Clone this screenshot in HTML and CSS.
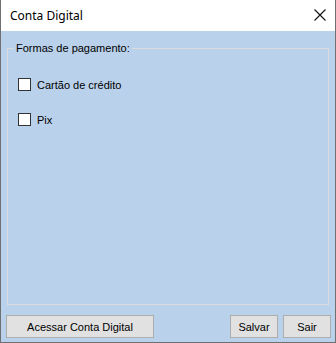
FILE: index.html
```html
<!DOCTYPE html>
<html>
<head>
    <link rel="stylesheet" href="styles.css">
</head>
<body>
    <div class="window">
        <div class="titlebar">
            <span class="title">Conta Digital</span>
            <svg class="close" width="12" height="12" viewBox="0 0 12 12">
                <path d="M0.5 0.5 L11.5 11.5 M11.5 0.5 L0.5 11.5" stroke="#111" stroke-width="1.1" fill="none"/>
            </svg>
        </div>

        <div class="client">
            <fieldset class="group">
                <legend>Formas de pagamento:</legend>
                <label class="check"><span class="box"></span>Cartão de crédito</label>
                <label class="check"><span class="box"></span>Pix</label>
            </fieldset>

            <div class="buttons">
                <button class="btn btn-wide">Acessar Conta Digital</button>
                <span class="spacer"></span>
                <button class="btn">Salvar</button>
                <button class="btn">Sair</button>
            </div>
        </div>
    </div>
</body>
</html>
```

FILE: styles.css
```css
body {
    margin: 0;
    background: #ffffff;
}

.window {
    width: 336px;
    height: 343px;
    box-sizing: border-box;
    border: 1px solid #707070;
    border-top: none;
    display: flex;
    flex-direction: column;
    font-family: "Liberation Sans", Arial, sans-serif;
    font-size: 11px;
    color: #000;
}

.titlebar {
    height: 31px;
    flex: none;
    background: #ffffff;
    display: flex;
    align-items: center;
    justify-content: space-between;
    padding: 0 9px 0 9px;
}

.title {
    font-family: "Noto Sans", "Liberation Sans", sans-serif;
    font-size: 12px;
    margin-top: -1px;
}

.close {
    margin-top: -1px;
}

.client {
    flex: 1;
    background: #b9d1ea;
    display: flex;
    flex-direction: column;
    padding: 11px 6px 0 6px;
}

.group {
    flex: 1;
    margin: 0;
    padding: 0 0 0 10px;
    border: 1px solid #dcdcdc;
    border-radius: 0;
    min-width: 0;
}

.group legend {
    margin-left: -4px;
    padding: 0 2px;
    line-height: 13px;
}

.check {
    display: flex;
    align-items: center;
    height: 13px;
    margin-top: 23px;
}

.check + .check {
    margin-top: 22px;
}

.box {
    width: 11px;
    height: 11px;
    border: 1px solid #333;
    background: #fff;
    margin-right: 6px;
}

.buttons {
    display: flex;
    height: 23px;
    margin: 10px -2px 0 -1px;
    padding-bottom: 4px;
    flex: none;
    box-sizing: content-box;
}

.spacer {
    flex: 1;
}

.btn {
    font-family: "Liberation Sans", Arial, sans-serif;
    font-size: 11px;
    color: #000;
    background: #e1e1e1;
    border: 1px solid #adadad;
    border-radius: 0;
    width: 48px;
    height: 23px;
    padding: 0;
    margin-left: 5px;
}

.btn-wide {
    width: 148px;
    margin-left: 0;
}
```
